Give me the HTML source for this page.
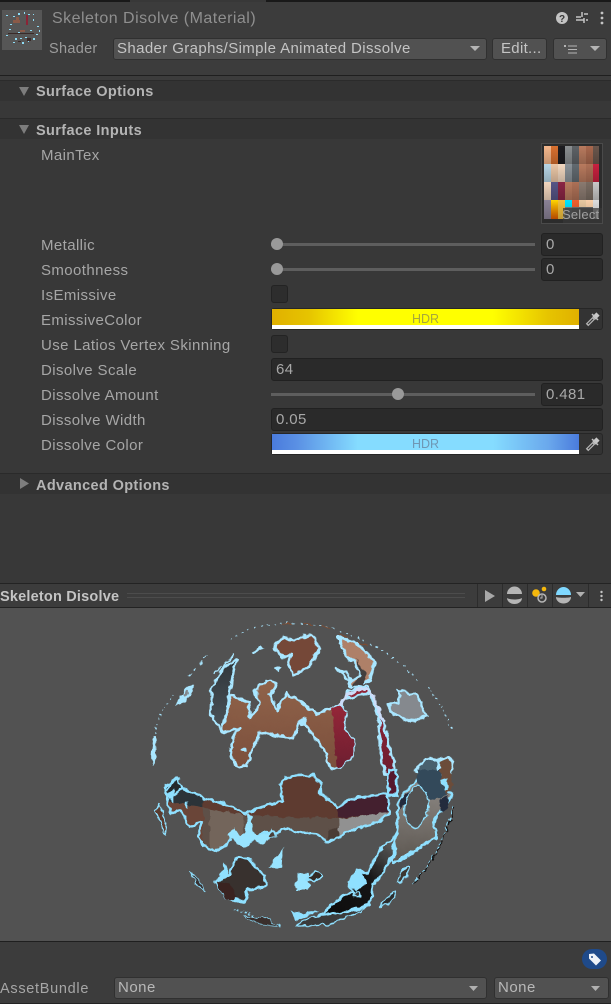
<!DOCTYPE html>
<html><head><meta charset="utf-8">
<style>
html,body{margin:0;padding:0;background:#383838}
#p{position:relative;width:611px;height:1004px;overflow:hidden;background:#383838;font-family:"Liberation Sans",sans-serif;font-size:15px;letter-spacing:.4px;color:#a6a6a6}
#p div{position:absolute;box-sizing:border-box}
.t{white-space:nowrap;line-height:18px}
.b{font-weight:bold;color:#b4b4b4;font-size:14.5px}
.f{background:#2a2a2a;border:1px solid #212121;border-radius:3px;color:#a8a8a8;padding-left:4px;line-height:21px;font-size:15px;letter-spacing:.4px}
.d{background:#515151;border:1px solid #303030;border-radius:3px;color:#c4c4c4;line-height:19px;padding-left:3px;font-size:15px;white-space:nowrap}
.c{background:#2d2d2d;border:1px solid #232323;border-radius:3px;width:17px;height:18px;left:271px}
.tr{left:271px;width:264px;height:3px;background:#5e5e5e}
.th{width:12px;height:12px;border-radius:50%;background:#999}
.l{left:0;width:611px;height:1px;background:#1f1f1f}
.h{left:0;width:611px;background:#333}
svg{position:absolute;overflow:visible}
</style></head><body><div id="p">
<div style="left:0;top:0;width:130px;height:2px;background:#191919"></div>
<div style="left:266px;top:0;width:345px;height:2px;background:#191919"></div>
<div style="left:0;top:2px;width:611px;height:73px;background:#3c3c3c"></div>
<div style="left:2px;top:10px;width:40px;height:40px;background:#565656"></div>
<svg style="left:0;top:0" width="50" height="55">
<g fill="#8fdcf5"><rect x="18" y="13" width="2" height="2"/><rect x="24" y="12" width="1" height="2"/><rect x="28" y="14" width="2" height="1"/><rect x="13" y="16" width="2" height="1"/><rect x="33" y="19" width="1" height="2"/><rect x="37" y="26" width="2" height="1"/><rect x="39" y="30" width="1" height="2"/><rect x="36" y="34" width="2" height="1"/><rect x="33" y="38" width="2" height="2"/><rect x="28" y="41" width="1" height="1"/><rect x="22" y="42" width="2" height="2"/><rect x="15" y="38" width="2" height="2"/><rect x="13" y="42" width="2" height="1"/><rect x="6" y="35" width="2" height="1"/><rect x="9" y="29" width="2" height="1"/><rect x="10" y="24" width="2" height="1"/><rect x="6" y="15" width="2" height="1"/><rect x="18" y="32" width="2" height="2"/><rect x="27" y="33" width="2" height="1"/><rect x="30" y="30" width="2" height="1"/><rect x="20" y="38" width="2" height="1"/><rect x="25" y="37" width="2" height="1"/><rect x="12" y="33" width="2" height="1"/><rect x="33" y="14" width="1" height="1"/><rect x="17" y="19" width="1" height="1"/></g>
<g fill="#8a5a48"><rect x="13" y="20" width="7" height="3"/><rect x="16" y="17" width="3" height="3"/><rect x="20" y="30" width="5" height="2"/></g>
<g fill="#8a2436"><rect x="26" y="15" width="2" height="10"/></g>
<g fill="#3a2a28"><rect x="8" y="33" width="26" height="1"/><rect x="27" y="38" width="4" height="3"/><rect x="18" y="41" width="3" height="1"/></g>
</svg>
<div class="t" style="left:52px;top:10px;font-size:16px;color:#8f8f8f;letter-spacing:.48px">Skeleton Disolve (Material)</div>
<div class="t" style="left:49px;top:40px;color:#9c9c9c;letter-spacing:.3px;font-size:14.5px">Shader</div>
<div class="d" style="left:113px;top:38px;width:374px;height:22px;letter-spacing:.38px">Shader Graphs/Simple Animated Dissolve</div>
<div class="d" style="left:492px;top:38px;width:55px;height:22px;padding-left:8px;letter-spacing:.3px">Edit...</div>
<div class="d" style="left:553px;top:38px;width:54px;height:22px"></div>
<svg style="left:0;top:0" width="611" height="70">
<path d="M470 46h10l-5 5zM590 46h10l-5 5z" fill="#b5b5b5"/>
<path d="M568 46h9M568 49.500h9M568 53h9" stroke="#b5b5b5" stroke-width="1"/><path d="M564 45h2v2h-2z" fill="#b5b5b5"/>
<circle cx="562" cy="18" r="6" fill="#c4c4c4"/>
<text x="562" y="22" font-size="10" font-weight="bold" text-anchor="middle" fill="#383838" font-family="Liberation Sans" letter-spacing="0">?</text>
<path d="M576 17h5M584 14h4M576 20h8M586 20h2" stroke="#c4c4c4" stroke-width="1.500" fill="none"/><path d="M582 12v5M584 18v5" stroke="#c4c4c4" stroke-width="1.500"/>
<circle cx="602" cy="13" r="1.400" fill="#c4c4c4"/><circle cx="602" cy="18" r="1.400" fill="#c4c4c4"/><circle cx="602" cy="23" r="1.400" fill="#c4c4c4"/>
</svg>
<div class="l" style="top:75px"></div>
<div style="left:0;top:76px;width:611px;height:4px;background:#3c3c3c"></div>
<div class="l" style="top:80px;background:#2b2b2b"></div>
<div class="h" style="top:81px;height:20px"></div>
<div class="t b" style="left:36px;top:83px;letter-spacing:.38px">Surface Options</div>
<div class="l" style="top:118px;background:#2a2a2a"></div>
<div class="h" style="top:119px;height:20px"></div>
<div class="t b" style="left:36px;top:122px;letter-spacing:.38px">Surface Inputs</div>
<svg style="left:0;top:0" width="40" height="500"><path d="M19 87h10l-5 9zM19 125h10l-5 9z" fill="#7d7d7d"/><path d="M20 478l9 5.500-9 5.500z" fill="#7d7d7d"/></svg>

<div class="t" style="left:41px;top:147px">MainTex</div>
<div class="t" style="left:41px;top:237px">Metallic</div>
<div class="t" style="left:41px;top:262px">Smoothness</div>
<div class="t" style="left:41px;top:287px">IsEmissive</div>
<div class="t" style="left:41px;top:312px">EmissiveColor</div>
<div class="t" style="left:41px;top:337px">Use Latios Vertex Skinning</div>
<div class="t" style="left:41px;top:362px">Disolve Scale</div>
<div class="t" style="left:41px;top:387px">Dissolve Amount</div>
<div class="t" style="left:41px;top:412px">Dissolve Width</div>
<div class="t" style="left:41px;top:437px">Dissolve Color</div>

<div style="left:541px;top:143px;width:62px;height:81px;background:#2c2c2c;border:1px solid #4a4a4a"></div>
<svg style="left:544px;top:146px" width="55" height="73">
<defs>
<linearGradient id="a" x1="0" y1="0" x2="0" y2="1"><stop offset="0" stop-color="#000" stop-opacity="0"/><stop offset="1" stop-color="#000" stop-opacity=".2"/></linearGradient>
<linearGradient id="y" x1="0" y1="0" x2="0" y2="1"><stop offset="0" stop-color="#ffd800"/><stop offset="1" stop-color="#e05a00"/></linearGradient>
</defs>
<rect x="0" y="0" width="7" height="18" fill="#f4b78c"/><rect x="7" y="0" width="7" height="18" fill="#d8702f"/><rect x="14" y="0" width="7" height="18" fill="#1c1c20"/><rect x="21" y="0" width="7" height="18" fill="#8a8e90"/><rect x="28" y="0" width="7" height="18" fill="#5e6266"/><rect x="35" y="0" width="7" height="18" fill="#b87a5e"/><rect x="42" y="0" width="7" height="18" fill="#a8684e"/><rect x="49" y="0" width="6" height="18" fill="#6a564c"/>
<rect x="0" y="18" width="7" height="18" fill="#b8d6e6"/><rect x="7" y="18" width="7" height="18" fill="#eac6a6"/><rect x="14" y="18" width="7" height="18" fill="#f2d8c0"/><rect x="21" y="18" width="7" height="18" fill="#8a9298"/><rect x="28" y="18" width="7" height="18" fill="#626a70"/><rect x="35" y="18" width="7" height="18" fill="#b87a5e"/><rect x="42" y="18" width="7" height="18" fill="#ad7056"/><rect x="49" y="18" width="6" height="18" fill="#c8203f"/>
<rect x="0" y="36" width="7" height="18" fill="#f2d6be"/><rect x="7" y="36" width="7" height="18" fill="#565486"/><rect x="14" y="36" width="7" height="18" fill="#8a2444"/><rect x="21" y="36" width="7" height="18" fill="#b87a5e"/><rect x="28" y="36" width="7" height="18" fill="#ad7056"/><rect x="35" y="36" width="7" height="18" fill="#8a7a70"/><rect x="42" y="36" width="7" height="18" fill="#7a6c62"/><rect x="49" y="36" width="6" height="18" fill="#c8c8c8"/>
<rect x="0" y="54" width="7" height="19" fill="#8a8296"/><rect x="7" y="54" width="7" height="19" fill="url(#y)"/><rect x="14" y="54" width="7" height="19" fill="#f0c040"/><rect x="21" y="54" width="7" height="7" fill="#00e4ff"/><rect x="21" y="61" width="7" height="12" fill="#7a8088"/><rect x="28" y="54" width="7" height="7" fill="#f06030"/><rect x="28" y="61" width="7" height="12" fill="#707070"/><rect x="35" y="54" width="7" height="7" fill="#e8c8a0"/><rect x="35" y="61" width="7" height="12" fill="#666"/><rect x="42" y="54" width="7" height="7" fill="#f8cfa8"/><rect x="42" y="61" width="7" height="12" fill="#666"/><rect x="49" y="54" width="6" height="19" fill="#ddd"/>
<rect width="55" height="18" fill="url(#a)"/><rect y="18" width="55" height="18" fill="url(#a)"/><rect y="36" width="55" height="18" fill="url(#a)"/><rect y="54" width="55" height="19" fill="url(#a)"/>
</svg>
<div style="left:563px;top:208px;width:39px;height:15px;background:rgba(56,56,56,.72)"></div>
<div class="t" style="left:562px;top:206px;font-size:13px;color:#a0a0a0;letter-spacing:.2px">Select</div>

<div class="tr" style="top:243px"></div><div class="th" style="left:271px;top:238px"></div>
<div class="f" style="left:541px;top:233px;width:62px;height:23px">0</div>
<div class="tr" style="top:268px"></div><div class="th" style="left:271px;top:263px"></div>
<div class="f" style="left:541px;top:258px;width:62px;height:23px">0</div>
<div class="c" style="top:285px"></div>
<div style="left:271px;top:308px;width:332px;height:22px;background:#333;border:1px solid #262626;border-radius:3px"></div>
<div style="left:272px;top:309px;width:307px;height:16px;background:linear-gradient(90deg,#e0b000 0,#e6c400 12%,#ffff00 28%,#ffff00 72%,#e6c400 90%,#e0b000 100%)"></div>
<div style="left:272px;top:325px;width:307px;height:4px;background:#fff"></div>
<div class="t" style="left:272px;width:307px;top:311px;text-align:center;font-size:12.500px;line-height:16px;color:#a8a83a;letter-spacing:0">HDR</div>
<div class="c" style="top:335px"></div>
<div class="f" style="left:271px;top:358px;width:332px;height:23px">64</div>
<div class="tr" style="top:393px"></div><div class="th" style="left:392px;top:388px"></div>
<div class="f" style="left:541px;top:383px;width:62px;height:23px">0.481</div>
<div class="f" style="left:271px;top:408px;width:332px;height:23px">0.05</div>
<div style="left:271px;top:433px;width:332px;height:22px;background:#333;border:1px solid #262626;border-radius:3px"></div>
<div style="left:272px;top:434px;width:307px;height:16px;background:linear-gradient(90deg,#4a7bdc 0,#5a90e4 8%,#85dcff 28%,#85dcff 72%,#6aa8ec 90%,#4a7bdc 100%)"></div>
<div style="left:272px;top:450px;width:307px;height:4px;background:#fff"></div>
<div class="t" style="left:272px;width:307px;top:436px;text-align:center;font-size:12.500px;line-height:16px;color:#6f97b4;letter-spacing:0">HDR</div>
<svg style="left:0;top:0" width="611" height="460" fill="none">
<path d="M587 325L594 318" stroke="#b4b4b4" stroke-width="3.500"/><path d="M588 324L593 319" stroke="#3a3a3a" stroke-width="1.200"/><path d="M594 318L598 314" stroke="#c8c8c8" stroke-width="4.500"/><path d="M592 314L598 320" stroke="#c0c0c0" stroke-width="1.500"/>
<path d="M587 450L594 443" stroke="#b4b4b4" stroke-width="3.500"/><path d="M588 449L593 444" stroke="#3a3a3a" stroke-width="1.200"/><path d="M594 443L598 439" stroke="#c8c8c8" stroke-width="4.500"/><path d="M592 439L598 445" stroke="#c0c0c0" stroke-width="1.500"/>
</svg>

<div class="l" style="top:473px;background:#2a2a2a"></div>
<div class="h" style="top:474px;height:20px"></div>
<div class="t b" style="left:36px;top:477px;letter-spacing:.36px">Advanced Options</div>
<svg style="left:0;top:0" width="40" height="500"><path d="M20 478l9 5.500-9 5.500z" fill="#7d7d7d"/></svg>

<div class="l" style="top:583px;background:#232323"></div>
<div style="left:0;top:584px;width:611px;height:23px;background:#3c3c3c"></div>
<div class="l" style="top:607px;background:#232323"></div>
<div class="t b" style="left:0;top:588px;letter-spacing:.2px;color:#c4c4c4">Skeleton Disolve</div>
<div style="left:127px;top:593px;width:338px;height:1px;background:#4c4c4c"></div>
<div style="left:127px;top:597px;width:338px;height:1px;background:#4c4c4c"></div>
<svg style="left:0;top:0" width="611" height="610">
<g fill="#2c2c2c"><rect x="477" y="584" width="1" height="23"/><rect x="502" y="584" width="1" height="23"/><rect x="527" y="584" width="1" height="23"/><rect x="552" y="584" width="1" height="23"/><rect x="588" y="584" width="1" height="23"/></g>
<path d="M485 590l10 6-10 6z" fill="#a8a8a8"/>
<path d="M507 594a7.500 7.500 0 0 1 15 0z" fill="#b5b5b5"/><path d="M507 598c3 2 12 2 15 0a7.500 6 0 0 1-15 0z" fill="#b5b5b5"/>
<circle cx="536" cy="593" r="3.800" fill="#f5b80c"/><circle cx="544" cy="589" r="2.300" fill="#f5b80c"/>
<circle cx="542" cy="598" r="4" fill="none" stroke="#b5b5b5" stroke-width="1.500"/><path d="M542 595v3h-2" stroke="#b5b5b5" fill="none"/>
<path d="M556 595a7.500 8 0 0 1 15 0z" fill="#7fd8ff"/><path d="M556 597c3 1 12 1 15 0a7.500 6.500 0 0 1-15 0z" fill="#b5b5b5"/>
<path d="M576 592h9l-4.500 5z" fill="#b0b0b0"/>
<circle cx="601.500" cy="592" r="1.200" fill="#c4c4c4"/><circle cx="601.500" cy="596" r="1.200" fill="#c4c4c4"/><circle cx="601.500" cy="600" r="1.200" fill="#c4c4c4"/>
</svg>

<div style="left:0;top:608px;width:611px;height:333px;background:#525252"></div>
<svg style="left:0;top:0" width="611" height="1004" viewBox="0 0 611 1004">
<defs>
<filter id="w" filterUnits="userSpaceOnUse" x="130" y="610" width="350" height="330" color-interpolation-filters="sRGB"><feTurbulence type="fractalNoise" baseFrequency=".14" numOctaves="2" seed="4"/><feDisplacementMap in="SourceGraphic" scale="6" xChannelSelector="R" yChannelSelector="G"/></filter>
<linearGradient id="br" x1="0" y1="0" x2="0" y2="1"><stop offset="0" stop-color="#90634a"/><stop offset="1" stop-color="#7b4f3c"/></linearGradient>
<linearGradient id="rd" x1="0" y1="0" x2="0" y2="1"><stop offset="0" stop-color="#952638"/><stop offset="1" stop-color="#6c1e30"/></linearGradient>
<linearGradient id="tl" x1="0" y1="0" x2="0" y2="1"><stop offset="0" stop-color="#2f363b"/><stop offset="1" stop-color="#4c5459"/></linearGradient>
<linearGradient id="bk" x1="1" y1="0" x2="0" y2="1"><stop offset="0" stop-color="#6a6a6a"/><stop offset=".45" stop-color="#151515"/><stop offset="1" stop-color="#0c0c0c"/></linearGradient>
<linearGradient id="gr" x1="0" y1="0" x2="0" y2="1"><stop offset="0" stop-color="#8e8a86"/><stop offset="1" stop-color="#5c5650"/></linearGradient>
<clipPath id="cb"><path d="M75 50L110 25 125 55 190 85 250 100 315 130 395 100 430 95 420 45 440 20 520 15 545 45 540 70 595 112 630 88 745 70 745 130 720 155 640 178 590 205 560 218 530 190 470 185 425 175 415 190 380 185 345 205 330 215 300 205 270 200 260 225 225 245 190 225 175 200 185 155 150 170 120 120 90 130 85 100z"/></clipPath>
</defs>
<g filter="url(#w)">
<g transform="translate(140 615) scale(.33333)" stroke="#a9e6ff" stroke-width="8" stroke-linejoin="round">
<path d="M245 350L275 240 325 262 330 305 360 270 345 225 380 195 410 205 390 240 410 285 440 235 480 260 530 295 575 280 600 270 620 290 610 345 640 375 640 420 600 462 570 460 550 400 510 350 490 310 470 330 460 370 400 360 360 350 340 400 320 450 290 455 270 410 285 350 300 340z" fill="url(#br)"/>
<path d="M575 280L600 270 620 290 610 345 640 375 640 420 600 462 590 460z" fill="url(#rd)" stroke="none"/>
<path d="M245 350L212 300 215 225 240 170 290 130 275 190 268 240z" fill="url(#tl)"/>
<path d="M405 90L430 65 465 75 515 60 540 100 520 130 510 155 460 180 445 150 455 120 430 125 405 100z" fill="#754838"/>
<path d="M595 65L650 85 705 140 690 195 650 215 625 210 665 175 640 140 620 125z" fill="#ae8068"/>
<path d="M645 130L680 175 670 210 635 213 665 180z" fill="#433f3e" stroke="none"/>
<path d="M625 225L680 215 715 280 730 330 745 380 770 480 735 480 720 400 715 300 690 235 655 240 620 250z" fill="url(#rd)"/>
<path d="M600 270L620 240 650 225 680 225 700 245 725 310 735 320" fill="none" stroke="#ccdcf8" stroke-width="9"/>
<path d="M775 225L830 240 860 305 810 320 790 310 750 290 750 265 775 262z" fill="#85898e"/>
<path d="M825 470L855 430 890 435 905 480z" fill="#48606e"/>
<path d="M895 435L925 425 940 440 930 480 895 480z" fill="#6b4c3a"/>
<path d="M335 110l30-14 8 4-28 16zM402 160l14-6 12 6-14 10zM105 270l30-50 25-12 5 12-30 40zM40 365l8 0 2 60-15 25 0-30z" fill="#a9e6ff" stroke="none"/>
<path d="M125 240l20-15 4 8-18 14z" fill="#82868a" stroke="none"/>
<path d="M490 305a10 14 0 1 0 1 0zM310 395a10 8 0 1 0 1 0z" fill="#a9e6ff" stroke="none"/>
<path d="M585 160L625 175 632 210 605 170z" fill="none" stroke-width="6"/>
<path d="M270 75l30-20 50-20 60-10 80-2 50 8 60 15 60 25 60 30 70 50 45 50" fill="none" stroke-width="3" stroke-dasharray="6 14"/>
<path d="M430 27l70-5 60 15 60 30 60 25" fill="none" stroke="#7f4b30" stroke-width="3" stroke-dasharray="30 28"/>
<path d="M100 240L60 300 40 370M865 215l40 60 30 70" fill="none" stroke-width="3" stroke-dasharray="4 10"/>
<path d="M150 185L200 120" fill="none" stroke-width="3" stroke-dasharray="10 14"/>
<path d="M245 165l35-50M220 175l25-20" fill="none" stroke-width="4"/>
</g>
<g transform="translate(140 770) scale(.33333)" stroke="#8fe0ff" stroke-width="8" stroke-linejoin="round">
<g clip-path="url(#cb)" stroke="none">
<rect x="60" y="0" width="700" height="300" fill="#5e3b30"/>
<rect x="60" y="0" width="130" height="130" fill="#2c3338"/>
<path d="M595 0H760V128L595 142z" fill="#44202f"/>
<path d="M60 92L190 112 310 136 595 146 760 124V300H60z" fill="#5e5048"/>
<path d="M60 92L190 112 190 300 60 300z" fill="#6a4538"/>
<path d="M210 116L310 136 310 300 210 300z" fill="#73655b"/>
<path d="M595 146L760 124V300H595z" fill="#919191"/>
<rect x="565" y="175" width="30" height="40" fill="#4a3c35"/>
</g>
<path d="M75 50L110 25 125 55 190 85 250 100 315 130 395 100 430 95 420 45 440 20 520 15 545 45 540 70 595 112 630 88 745 70 745 130 720 155 640 178 590 205 560 218 530 190 470 185 425 175 415 190 380 185 345 205 330 215 300 205 270 200 260 225 225 245 190 225 175 200 185 155 150 170 120 120 90 130 85 100z" fill="none"/>
<path d="M745 0h25v75l-25 0z" fill="#55192d"/>
<path d="M775 95L800 60 830 30 925 60 935 80 905 120 880 160 890 200 830 240 760 280 770 180z" fill="url(#gr)"/>
<path d="M830 0L900 0 925 70 900 85 870 90 830 35z" fill="#33495a" stroke="none"/>
<path d="M778 125L785 85 825 52 800 100zM895 90L925 75 925 115 905 125z" fill="#232b3d" stroke="none"/>
<ellipse cx="830" cy="112" rx="34" ry="62" transform="rotate(8 830 112)" fill="#525252" stroke-width="4"/>
<path d="M905 0h25l10 50-20 20-15-30z" fill="#6b4c3a" stroke="none"/>
<path d="M905 30l15-5 6 30-15 5z" fill="#8fe0ff" stroke="none"/>
<path d="M45 120L60 105 80 165 75 195z" fill="#5a3c30" stroke-width="4"/>
<path d="M285 265L325 265 370 315 380 350 320 360 315 395 260 385 225 335 270 310z" fill="#38312e"/>
<path d="M225 335L270 340 290 385 260 390z" fill="#3a2320" stroke="none"/>
<path d="M770 195L755 265 720 320 700 345 690 400 650 415 600 430 540 435 600 385 640 365 625 340 650 300 680 310 720 240z" fill="url(#bk)"/>
<path d="M520 440L600 430 650 420 690 405 640 435 560 465 470 470 490 450z" fill="#3b3b3b" stroke-width="4"/>
<path d="M280 415l80 30 60 25" fill="none" stroke-width="3" stroke-dasharray="6 6"/>
<path d="M310 440l60 0 50 28-60-5z" fill="#3a2f2c" stroke-width="2"/>
<path d="M150 305l30 30 15 30-20-15z" fill="#383030" stroke-width="3"/>
<path d="M262 195l20-20 18 20 18-5 2-60 15 5 2 50 22 15 40-25-2 25-32 25-25-15-30 25z" fill="#98e4ff" stroke="none"/>
<path d="M385 295L415 255 428 232 425 290zM465 360L472 310 505 310 510 350 500 360z" fill="#98e4ff" stroke="none"/>
<path d="M500 325l25-20 25 15-25 12z" fill="#332a25" stroke-width="5"/>
<path d="M80 60l20-25 15-10 10 30-35 30z" fill="#24292d" stroke-width="6"/>
<path d="M80 70l20-10 0 40z" fill="#8fe0ff" stroke="none"/>
<path d="M137 95h8v20h-8z" fill="#8fe0ff" stroke="none"/>
<path d="M450 420l35 10 55-10-40 20-30 10z" fill="#8fe0ff" stroke="none"/>
<path d="M625 340l20-40 25 10 10 30-30 25z" fill="#8fe0ff" stroke="none"/>
<path d="M640 375a12 8 0 1 1 24 0 12 8 0 1 1-24 0z" fill="#3a3a3a" stroke-width="4"/>
<path d="M770 335l20-40 18-5-8 30-20 20z" fill="#3c3730" stroke-width="5"/>
<path d="M720 410l30-40 20-5-20 35z" fill="#2c2c2c" stroke-width="4"/>
<path d="M815 342Q900 260 940 110" fill="none" stroke="#8fe0ff" stroke-width="3" stroke-dasharray="10 6"/>
<path d="M820 340Q902 262 943 112" fill="none" stroke="#111" stroke-width="3" stroke-dasharray="18 5"/>
<path d="M385 195a12 8 0 1 1 24 0 12 8 0 1 1-24 0z" fill="#4a3e38" stroke-width="3"/>
<path d="M240 320l15-40 10 25-10 20z" fill="#8fe0ff" stroke="none"/>
</g>
</g>
</svg>

<div class="l" style="top:941px;background:#1f1f1f"></div>
<div style="left:0;top:942px;width:611px;height:62px;background:#3c3c3c"></div>
<div style="left:582px;top:949px;width:25px;height:20px;border-radius:10px;background:#1f4a8a"></div>
<svg style="left:0;top:0" width="611" height="1004">
<path d="M589 954l5-.5 7 7-5 5-7-7z" fill="#eef2f8"/><circle cx="592" cy="957" r="1" fill="#1f4a8a"/>
</svg>
<div class="t" style="left:0;top:980px;letter-spacing:.7px;font-size:14.5px">AssetBundle</div>
<div class="d" style="left:114px;top:977px;width:373px;height:22px;line-height:19px;color:#b8b8b8;letter-spacing:.5px">None</div>
<div class="d" style="left:494px;top:977px;width:115px;height:22px;line-height:19px;color:#b8b8b8;letter-spacing:.5px">None</div>
<svg style="left:0;top:0" width="611" height="1004"><path d="M469 986h9l-4.500 5zM591 986h9l-4.500 5z" fill="#b0b0b0"/></svg>
<div style="left:0;top:1003px;width:611px;height:1px;background:#232323"></div>
</div></body></html>
